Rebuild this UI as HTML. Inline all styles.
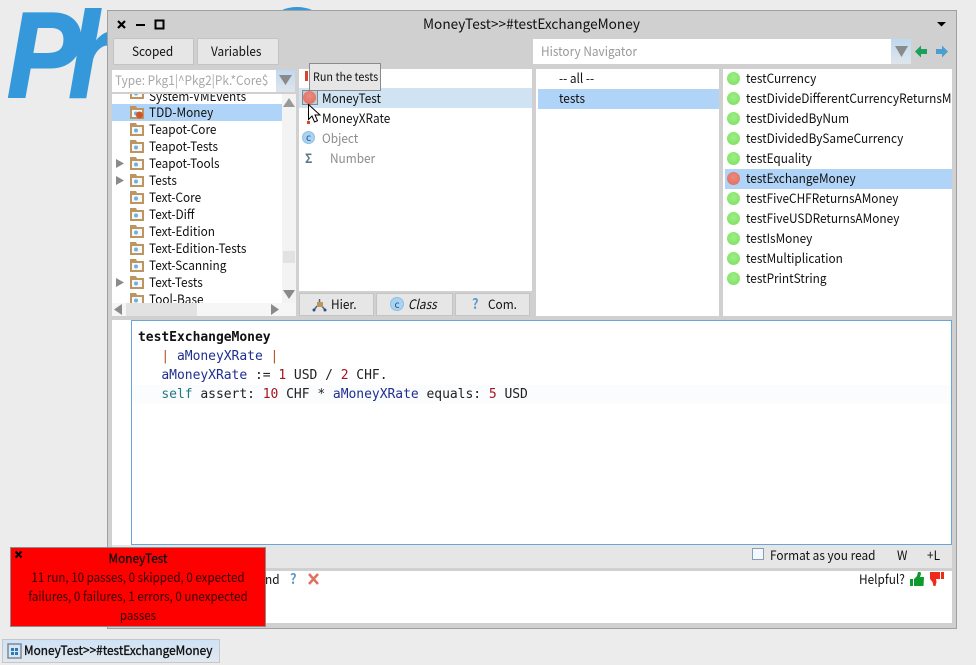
<!DOCTYPE html>
<html><head><meta charset="utf-8">
<style>
html,body{margin:0;padding:0;}
body{width:976px;height:665px;position:relative;overflow:hidden;background:#ececec;font-family:"Noto Sans CJK SC","Liberation Sans",sans-serif;font-size:13px;color:#111;}
div,span.a,svg{position:absolute;}
.t{white-space:nowrap;line-height:20px;height:20px;margin-top:-1px;transform:scaleX(.91);transform-origin:0 50%;}
.c{text-align:center;transform-origin:50% 50%;}
.p{background:#fff;overflow:hidden;}
.btn{background:#e6e6e6;border:1px solid #c4c4c4;box-sizing:border-box;text-align:center;}
.sel{background:#b0d4f8;}
.g{width:13px;height:13px;border-radius:50%;background:radial-gradient(circle at 50% 40%,#9cf084,#7cdc60);}
.r{width:13px;height:13px;border-radius:50%;background:radial-gradient(circle at 50% 40%,#ee8a7c,#dc6c5e);}
pre{position:absolute;margin:0;font-family:"DejaVu Sans Mono",monospace;font-size:13px;letter-spacing:-.03px;line-height:19px;color:#222;white-space:pre;}
.v{color:#1f2f8f}.n{color:#a3141e}.s{color:#1f7a80}.b{color:#b3541e}
</style></head><body>
<svg width="976" height="665" style="left:0;top:0">
<defs>
<g id="fold"><path d="M0 0h6l1 2h7v11H0z" fill="#bd9560"/><rect x="2" y="4" width="10" height="7" fill="#f6f8fa"/><circle cx="6" cy="7.500" r="2" fill="#6fb0dc"/></g>
</defs>
<text transform="translate(7 97) scale(.9 1)" x="0" y="0" font-family="Liberation Sans" font-weight="700" font-style="italic" font-size="122" fill="#3498db" stroke="#3498db" stroke-width="2" letter-spacing="-13">Ph</text>
<circle cx="297" cy="46" r="39" fill="#3498db"/>
</svg>

<!-- window -->
<div style="left:107px;top:10px;width:850px;height:619px;background:#d0d0d0;border:1px solid #a0a0a0;box-sizing:border-box"></div>
<svg width="60" height="20" style="left:110px;top:14px"><path d="M8 7l7 7M15 7l-7 7" stroke="#000" stroke-width="2.200"/><rect x="26" y="10" width="9" height="2" fill="#000"/><rect x="45.500" y="6.500" width="8" height="8" fill="none" stroke="#000" stroke-width="2"/></svg>
<div class="t" style="left:423px;top:15px;font-size:14px;transform:scaleX(.973)">MoneyTest&gt;&gt;#testExchangeMoney</div>
<svg width="12" height="8" style="left:936px;top:21px"><path d="M1 1h9l-4.500 4.500z" fill="#000"/></svg>

<!-- top buttons -->
<div class="btn" style="left:113px;top:38px;width:81px;height:27px"></div>
<div class="btn" style="left:197px;top:38px;width:82px;height:27px"></div>
<div class="t" style="left:132px;top:42px">Scoped</div>
<div class="t" style="left:211px;top:42px">Variables</div>
<div style="left:533px;top:39px;width:358px;height:25px;background:#fff"></div>
<div class="t" style="left:541px;top:42px;color:#999">History Navigator</div>
<div style="left:891px;top:39px;width:20px;height:25px;background:linear-gradient(#bfd8f0,#dfe6ec)"></div>
<svg width="60" height="25" style="left:892px;top:39px"><path d="M3 7h13l-6.500 11z" fill="#8a8a8a"/><path d="M23 12.500l6-6v3.500h6v5h-6v3.500z" fill="#1aa05a"/><path d="M56 12.500l-6-6v3.500h-6v5h6v3.500z" fill="#4a9ed0"/></svg>

<!-- package list -->
<div style="left:112px;top:70px;width:164px;height:22px;background:#fff"></div>
<div class="t" style="left:115px;top:71px;color:#a8a8a8">Type: Pkg1|^Pkg2|Pk.*Core$</div>
<div style="left:276px;top:70px;width:19px;height:22px;background:linear-gradient(#bfd8f0,#dfe6ec)"></div>
<svg width="14" height="11" style="left:279px;top:75px"><path d="M0 0h13l-6.500 10z" fill="#8a8a8a"/></svg>
<div class="p" style="left:112px;top:94px;width:170px;height:209px;">
 <div class="sel" style="left:0;top:10px;width:170px;height:17px"></div>
 <div class="t" style="left:37px;top:-7px">System-VMEvents</div>
 <div class="t" style="left:37px;top:9px">TDD-Money</div>
 <div class="t" style="left:37px;top:26px">Teapot-Core</div>
 <div class="t" style="left:37px;top:43px">Teapot-Tests</div>
 <div class="t" style="left:37px;top:60px">Teapot-Tools</div>
 <div class="t" style="left:37px;top:77px">Tests</div>
 <div class="t" style="left:37px;top:94px">Text-Core</div>
 <div class="t" style="left:37px;top:111px">Text-Diff</div>
 <div class="t" style="left:37px;top:128px">Text-Edition</div>
 <div class="t" style="left:37px;top:145px">Text-Edition-Tests</div>
 <div class="t" style="left:37px;top:162px">Text-Scanning</div>
 <div class="t" style="left:37px;top:179px">Text-Tests</div>
 <div class="t" style="left:37px;top:196px">Tool-Base</div>
 <svg width="40" height="209" style="left:0;top:0">
  <use href="#fold" x="18" y="-8"/><use href="#fold" x="18" y="12"/><use href="#fold" x="18" y="29"/><use href="#fold" x="18" y="46"/><use href="#fold" x="18" y="63"/><use href="#fold" x="18" y="80"/><use href="#fold" x="18" y="97"/><use href="#fold" x="18" y="114"/><use href="#fold" x="18" y="131"/><use href="#fold" x="18" y="148"/><use href="#fold" x="18" y="165"/><use href="#fold" x="18" y="182"/><use href="#fold" x="18" y="199"/>
  <circle cx="27.500" cy="21" r="3.500" fill="#d2552a"/>
  <path d="M4 65v9l8-4.500zM4 82v9l8-4.500zM4 184v9l8-4.500z" fill="#8a8a8a"/>
 </svg>
</div>
<!-- scrollbars -->
<div style="left:282px;top:94px;width:14px;height:209px;background:#f3f3f3"></div>
<div style="left:283px;top:251px;width:12px;height:12px;background:#e2e2e2"></div>
<svg width="14" height="212" style="left:282px;top:91px"><path d="M1 16l6-9 6 9z" fill="#999"/><path d="M1 199h12l-6 9z" fill="#8a8a8a"/></svg>
<div style="left:112px;top:303px;width:184px;height:13px;background:#f6f6f6"></div>
<div style="left:126px;top:303px;width:71px;height:13px;background:#e2e2e2"></div>
<svg width="184" height="13" style="left:112px;top:303px"><path d="M10 1v11l-8-5.500zM159 1v11l8-5.500z" fill="#8a8a8a"/></svg>

<!-- class list -->
<div class="p" style="left:299px;top:69px;width:233px;height:222px">
 <div style="left:0;top:19px;width:233px;height:20px;background:#cfe3f3"></div>
 <div class="t" style="left:23px;top:20px">MoneyTest</div>
 <div class="t" style="left:23px;top:40px">MoneyXRate</div>
 <div class="t" style="left:23px;top:60px;color:#8c8c8c">Object</div>
 <div class="t" style="left:31px;top:80px;color:#8c8c8c">Number</div>
 <div style="left:3px;top:62px;width:13px;height:13px;border-radius:50%;background:#a8d4f4;border:1px solid #8fbfe0;box-sizing:border-box;font-size:10px;line-height:10px;text-align:center;color:#34507a">c</div>
 <div class="t" style="left:6px;top:80px;color:#5a7a8c;font-weight:700">Σ</div>
 <div style="left:6px;top:2px;width:3px;height:10px;background:#d8452e"></div>
 <div style="left:8px;top:52px;width:3px;height:3px;background:#d8452e"></div>
</div>
<div style="left:302px;top:90px;width:16px;height:15px;border:1px solid #888;box-sizing:border-box;background:#bcd0dc"></div>
<div class="r" style="left:303px;top:91px"></div>
<div style="left:309px;top:63px;width:72px;height:28px;background:#e6e6e6;border:1px solid #8a8a8a;box-sizing:border-box"></div>
<div class="t" style="left:313px;top:68px;font-size:11.500px;transform:scaleX(.94)">Run the tests</div>
<svg width="16" height="22" style="left:307px;top:103px"><path d="M1.500 1.500v15l3.500-3.500 2.500 6 3-1.300-2.500-5.700h5z" fill="#fff" stroke="#000" stroke-width="1"/></svg>

<div class="btn" style="left:299px;top:293px;width:75px;height:23px"></div>
<div class="t" style="left:331px;top:295px">Hier.</div>
<svg width="16" height="16" style="left:312px;top:297px"><path d="M7.500 2v4M5 9l-3 4M10 9l3 4" stroke="#4a6a8a" stroke-width="1.500"/><rect x="5" y="5" width="6" height="5" fill="#c09458"/><circle cx="2" cy="13" r="1.500" fill="#34507a"/><circle cx="13" cy="13" r="1.500" fill="#34507a"/></svg>
<div class="btn" style="left:376px;top:293px;width:77px;height:23px"></div>
<div class="t" style="left:408px;top:295px;font-style:italic">Class</div>
<div style="left:390px;top:297px;width:14px;height:14px;border-radius:50%;background:#a8d4f4;border:1px solid #8fbfe0;box-sizing:border-box;font-size:10px;line-height:11px;text-align:center;color:#34507a">c</div>
<div class="btn" style="left:455px;top:293px;width:75px;height:23px"></div>
<div class="t" style="left:488px;top:295px">Com.</div>
<div class="t" style="left:472px;top:295px;color:#5a9ac8;font-weight:700;font-size:14px">?</div>

<!-- protocols -->
<div class="p" style="left:536px;top:69px;width:183px;height:247px">
 <div class="sel" style="left:2px;top:20px;width:181px;height:20px"></div>
 <div class="t" style="left:23px;top:0">-- all --</div>
 <div class="t" style="left:23px;top:20px">tests</div>
</div>

<!-- methods -->
<div class="p" style="left:723px;top:69px;width:229px;height:247px">
 <div class="sel" style="left:2px;top:100px;width:227px;height:20px"></div>
 <div class="t" style="left:23px;top:0">testCurrency</div><div class="g" style="left:4px;top:3px"></div>
 <div class="t" style="left:23px;top:20px">testDivideDifferentCurrencyReturnsMoney</div><div class="g" style="left:4px;top:23px"></div>
 <div class="t" style="left:23px;top:40px">testDividedByNum</div><div class="g" style="left:4px;top:43px"></div>
 <div class="t" style="left:23px;top:60px">testDividedBySameCurrency</div><div class="g" style="left:4px;top:63px"></div>
 <div class="t" style="left:23px;top:80px">testEquality</div><div class="g" style="left:4px;top:83px"></div>
 <div class="t" style="left:23px;top:100px">testExchangeMoney</div><div class="r" style="left:4px;top:103px"></div>
 <div class="t" style="left:23px;top:120px">testFiveCHFReturnsAMoney</div><div class="g" style="left:4px;top:123px"></div>
 <div class="t" style="left:23px;top:140px">testFiveUSDReturnsAMoney</div><div class="g" style="left:4px;top:143px"></div>
 <div class="t" style="left:23px;top:160px">testIsMoney</div><div class="g" style="left:4px;top:163px"></div>
 <div class="t" style="left:23px;top:180px">testMultiplication</div><div class="g" style="left:4px;top:183px"></div>
 <div class="t" style="left:23px;top:200px">testPrintString</div><div class="g" style="left:4px;top:203px"></div>
</div>

<!-- code -->
<div style="left:112px;top:320px;width:20px;height:225px;background:#fff"></div>
<div style="left:131px;top:320px;width:821px;height:225px;background:#fff;border:1px solid #6aa5d8;box-sizing:border-box"></div>
<div style="left:132px;top:385px;width:819px;height:19px;background:#fbfcfe"></div>
<pre style="left:138px;top:328px"><b style="color:#111">testExchangeMoney</b>
   <span class="b">|</span> <span class="v">aMoneyXRate</span> <span class="b">|</span>
   <span class="v">aMoneyXRate</span> := <span class="n">1</span> USD / <span class="n">2</span> CHF.
   <span class="s">self</span> assert: <span class="n">10</span> CHF * <span class="v">aMoneyXRate</span> equals: <span class="n">5</span> USD</pre>

<!-- status -->
<div style="left:112px;top:545px;width:840px;height:23px;background:#e6e6e6"></div>
<div style="left:752px;top:548px;width:12px;height:12px;background:#f2f8fe;border:1px solid #8c9cb0;box-sizing:border-box"></div>
<div class="t" style="left:770px;top:546px">Format as you read</div>
<div class="t" style="left:897px;top:546px">W</div>
<div class="t" style="left:927px;top:546px">+L</div>

<!-- bottom -->
<div style="left:112px;top:571px;width:840px;height:52px;background:#fff"></div>
<div class="t" style="left:265px;top:570px">nd</div>
<div class="t" style="left:290px;top:570px;color:#5a9ac8;font-weight:700;font-size:14px">?</div>
<svg width="14" height="14" style="left:307px;top:572px"><path d="M2 2l9 10M11 2l-9 10" stroke="#e07060" stroke-width="2.500"/></svg>
<div class="t" style="left:859px;top:570px">Helpful?</div>
<svg width="36" height="17" style="left:909px;top:571px"><path d="M1 8h3v7H1zM5 8l3-3 1-4h2.500l.5 2-1 3h4l-.5 9H5z" fill="#0f9a2e"/><path d="M21 1h10v7h-4l.5 3-1 4h-2l-1-4-2.500-3zM32 1h3v7h-3z" fill="#ee2a1a"/></svg>

<!-- red popup -->
<div style="left:10px;top:547px;width:256px;height:80px;background:#fe0000;border:1px solid #8c8c8c;box-sizing:border-box"></div>
<svg width="10" height="10" style="left:14px;top:550px"><path d="M1.500 1.500l6 6M7.500 1.500l-6 6" stroke="#000" stroke-width="2"/></svg>
<div class="t c" style="left:10px;top:549px;width:256px;color:#111;-webkit-text-stroke:.3px #111">MoneyTest</div>
<div class="t c" style="left:10px;top:568px;width:256px;color:#300;transform:scaleX(.89)">11 run, 10 passes, 0 skipped, 0 expected</div>
<div class="t c" style="left:10px;top:587px;width:256px;color:#300;transform:scaleX(.89)">failures, 0 failures, 1 errors, 0 unexpected</div>
<div class="t c" style="left:10px;top:606px;width:256px;color:#300;transform:scaleX(.89)">passes</div>

<!-- taskbar -->
<div style="left:2px;top:639px;width:218px;height:24px;background:linear-gradient(#cfe3f6,#e2e8ee);border:1px solid #c4c8cc;box-sizing:border-box"></div>
<svg width="16" height="16" style="left:7px;top:643px"><rect x="1" y="1" width="13" height="14" fill="none" stroke="#7a8a98" stroke-width="1.500"/><path d="M4 5h3v3H4zM8 5h3v3H8zM4 9h3v3H4zM8 9h3v3H8z" fill="#2a7ab8"/></svg>
<div class="t" style="left:24px;top:641px;-webkit-text-stroke:.35px #111;color:#111">MoneyTest&gt;&gt;#testExchangeMoney</div>
</body></html>
